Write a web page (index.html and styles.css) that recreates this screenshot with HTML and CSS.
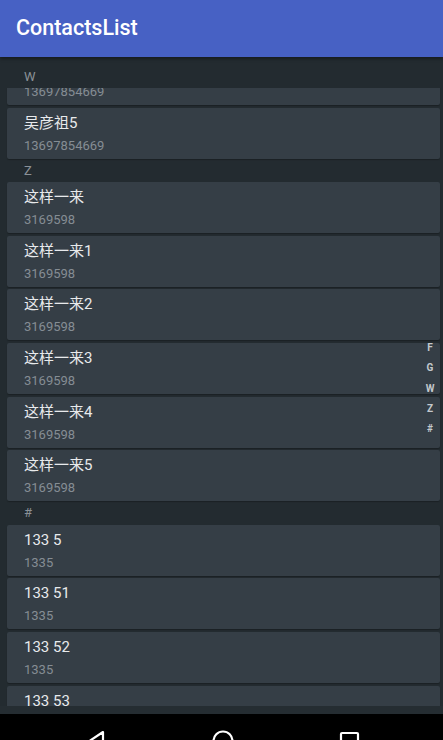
FILE: index.html
```html
<!DOCTYPE html>
<html lang="zh">
<head>
    <meta charset="UTF-8">
    <meta name="viewport" content="width=device-width, initial-scale=1.0">
    <title>ContactsList</title>
    <link rel="stylesheet" href="styles.css">
</head>
<body>
    <div class="app-bar">ContactsList</div>

    <div class="content">
        <div class="list">
            <div class="pinned-header">W</div>

            <div class="groups">
                <div class="group">
                    <div class="cards">
                        <!-- scrolled up under the pinned header, only the number still shows -->
                        <div class="card scrolled"><div class="phone">13697854669</div></div>
                        <div class="card"><div class="name">吴彦祖5</div><div class="phone">13697854669</div></div>
                    </div>
                </div>

                <div class="group">
                    <div class="group-header">Z</div>
                    <div class="cards">
                        <div class="card"><div class="name">这样一来</div><div class="phone">3169598</div></div>
                        <div class="card"><div class="name">这样一来1</div><div class="phone">3169598</div></div>
                        <div class="card"><div class="name">这样一来2</div><div class="phone">3169598</div></div>
                        <div class="card"><div class="name">这样一来3</div><div class="phone">3169598</div></div>
                        <div class="card"><div class="name">这样一来4</div><div class="phone">3169598</div></div>
                        <div class="card"><div class="name">这样一来5</div><div class="phone">3169598</div></div>
                    </div>
                </div>

                <div class="group">
                    <div class="group-header">#</div>
                    <div class="cards">
                        <div class="card"><div class="name">133 5</div><div class="phone">1335</div></div>
                        <div class="card"><div class="name">133 51</div><div class="phone">1335</div></div>
                        <div class="card"><div class="name">133 52</div><div class="phone">1335</div></div>
                        <div class="card"><div class="name">133 53</div><div class="phone">1335</div></div>
                    </div>
                </div>
            </div>

            <div class="side-index">
                <span>F</span>
                <span>G</span>
                <span>W</span>
                <span>Z</span>
                <span>#</span>
            </div>
        </div>
    </div>

    <div class="nav-bar">
        <svg width="443" height="26" viewBox="0 0 443 26">
            <g fill="none" stroke="#ffffff" stroke-width="2.2" stroke-linejoin="round">
                <polygon points="103,18 88,28 103,38"></polygon>
                <circle cx="223" cy="27" r="9.5"></circle>
                <rect x="341" y="19" width="17" height="17" rx="1"></rect>
            </g>
        </svg>
    </div>
</body>
</html>
```

FILE: styles.css
```css
body {
    margin: 0;
    padding: 0;
    width: 443px;
    height: 740px;
    overflow: hidden;
    background-color: #232b30;
    font-family: Roboto, "Noto Sans CJK SC", sans-serif;
}
.app-bar {
    position: relative;
    z-index: 2;
    height: 57px;
    box-sizing: border-box;
    padding-left: 16px;
    line-height: 56px;
    font-size: 21.5px;
    font-weight: 500;
    color: #ffffff;
    background-color: #4761c4;
    box-shadow: 0 2px 3px rgba(0, 0, 0, 0.35);
}
.content {
    height: 657px;
    box-sizing: border-box;
    padding-bottom: 8px;
    background-color: #252d32;
}
.list {
    position: relative;
    height: 649px;
    overflow: hidden;
    background-color: #232b30;
}
.pinned-header {
    position: absolute;
    top: 0;
    left: 0;
    right: 0;
    z-index: 1;
    height: 31px;
    box-sizing: border-box;
    padding: 8px 0 0 24px;
    line-height: 24px;
    font-size: 13px;
    color: #8a9197;
    background-color: #232b30;
}
.groups {
    margin-top: -3px;
}
.group-header {
    height: 23.6px;
    padding-left: 24px;
    line-height: 24px;
    font-size: 13px;
    color: #8a9197;
}
.cards {
    display: flex;
    flex-direction: column;
    gap: 2.6px;
    padding: 0 3px 0 7px;
}
.card {
    height: 51px;
    box-sizing: border-box;
    padding-left: 17px;
    border-radius: 2px;
    background-color: #353e46;
    box-shadow: 0 1px 1px rgba(0, 0, 0, 0.25);
}
.card.scrolled {
    padding-top: 30px;
}
.card.scrolled .phone {
    margin-top: 0;
}
.name {
    padding-top: 5px;
    line-height: 20px;
    font-size: 15px;
    color: #e8eaec;
}
.phone {
    margin-top: 5px;
    line-height: 16px;
    font-size: 13px;
    color: #858d94;
}
.side-index {
    position: absolute;
    top: 281px;
    right: 7px;
    width: 12px;
    display: flex;
    flex-direction: column;
    align-items: center;
    font-size: 10px;
    font-weight: bold;
    line-height: 20.3px;
    color: #c3c8cc;
}
.nav-bar {
    height: 26px;
    background-color: #000000;
}
.nav-bar svg {
    display: block;
}
```
